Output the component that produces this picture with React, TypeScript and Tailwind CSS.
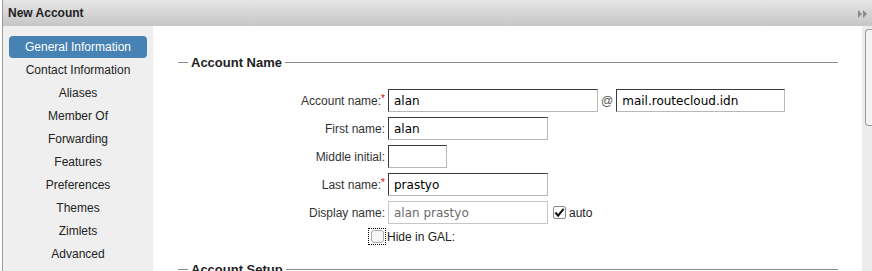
const navItems = [
  "General Information",
  "Contact Information",
  "Aliases",
  "Member Of",
  "Forwarding",
  "Features",
  "Preferences",
  "Themes",
  "Zimlets",
  "Advanced",
];

function Legend({ title }: { title: string }) {
  return (
    <div className="flex items-center h-[16px]">
      <div className="w-[10px] h-px bg-[#8a8a8a]" />
      <span className="px-[3px] text-[13px] font-bold text-[#222] leading-none">{title}</span>
      <div className="flex-1 h-px bg-[#8a8a8a]" />
    </div>
  );
}

function TextBox({ value, width, muted }: { value: string; width: string; muted?: boolean }) {
  return (
    <div
      className={`${width} h-[23px] flex items-center pl-[5px] text-[12px] border ${
        muted
          ? "border-[#c6c6c6] text-[#6b6b6b]"
          : "border-t-[#3a3a3a] border-l-[#3a3a3a] border-r-[#b8b8b8] border-b-[#b8b8b8] text-black"
      }`}
      style={{ fontFamily: "'DejaVu Sans', sans-serif" }}
    >
      {value}
    </div>
  );
}

function Row({ label, required, children }: { label: string; required?: boolean; children: React.ReactNode }) {
  return (
    <div className="flex items-center h-[23px]">
      <div className="w-[210px] pr-[3px] text-right text-[12px] text-[#333]">
        {label}
        {required ? <span className="text-[#d00] relative -top-[3px] text-[10px]">*</span> : null}
      </div>
      {children}
    </div>
  );
}

export default function App() {
  return (
    <div
      className="w-[872px] h-[271px] flex overflow-hidden bg-white"
      style={{ fontFamily: "'Liberation Sans', Arial, sans-serif" }}
    >
      <div className="w-[2px] bg-white" />
      <div className="flex-1 flex flex-col border-l border-[#9a9a9a]">
        {/* Title bar */}
        <div className="h-[26px] flex items-center justify-between pl-[5px] pr-[5px] bg-gradient-to-b from-[#e6e6e6] to-[#c6c6c6]">
          <span className="text-[12px] font-bold text-[#222]">New Account</span>
          <svg width="9" height="8" viewBox="0 0 9 8" className="mt-[2px]">
            <path d="M0 0 L4 4 L0 8 Z M5 0 L9 4 L5 8 Z" fill="#8a8a8a" />
          </svg>
        </div>

        <div className="flex-1 flex min-h-0">
          {/* Side nav */}
          <div className="w-[150px] bg-[#efefef] pt-[10px] flex flex-col">
            {navItems.map((item, i) => (
              <div
                key={item}
                className={`mx-[6px] flex items-center justify-center text-[12px] ${
                  i === 0 ? "bg-[#4682b4] text-white rounded-[4px] h-[22px]" : "h-[23px] text-[#222]"
                }`}
              >
                {item}
              </div>
            ))}
          </div>

          {/* Form */}
          <div className="flex-1 pt-[28px] pl-[25px] pr-[24px]">
            <Legend title="Account Name" />
            <div className="mt-[19px] flex flex-col gap-[5px]">
              <Row label="Account name:" required>
                <TextBox value="alan" width="w-[210px]" />
                <span className="px-[3px] text-[12px] text-[#555]">@</span>
                <TextBox value="mail.routecloud.idn" width="w-[169px]" />
              </Row>
              <Row label="First name:">
                <TextBox value="alan" width="w-[160px]" />
              </Row>
              <Row label="Middle initial:">
                <TextBox value="" width="w-[59px]" />
              </Row>
              <Row label="Last name:" required>
                <TextBox value="prastyo" width="w-[160px]" />
              </Row>
              <Row label="Display name:">
                <TextBox value="alan prastyo" width="w-[160px]" muted />
                <div className="ml-[5px] w-[13px] h-[13px] border border-[#888] rounded-[2px] bg-white flex items-center justify-center">
                  <svg width="12" height="11" viewBox="0 0 12 11">
                    <path d="M1.5 5.5 L4.5 9 L10.5 1.5" fill="none" stroke="#111" strokeWidth="2.2" />
                  </svg>
                </div>
                <span className="ml-[3px] text-[12px] text-[#222]">auto</span>
              </Row>
              <div className="flex items-center h-[17px] -mt-[1px]">
                <div className="w-[190px]" />
                <div className="w-[18px] h-[17px] border border-dotted border-black flex items-center justify-center">
                  <div className="w-[13px] h-[13px] border border-[#aaa] rounded-[3px] bg-[#f7f7f7]" />
                </div>
                <span className="ml-[1px] text-[12px] text-[#222]">Hide in GAL:</span>
              </div>
            </div>
            <div className="mt-[16px]">
              <Legend title="Account Setup" />
            </div>
          </div>

          {/* Scrollbar */}
          <div className="w-[10px] bg-[#ececec] pt-[3px] pl-[3px]">
            <div className="h-[97px] border border-[#9a9a9a] border-r-0 rounded-l-[4px] bg-[#f3f3f3]" />
          </div>
        </div>
      </div>
    </div>
  );
}
